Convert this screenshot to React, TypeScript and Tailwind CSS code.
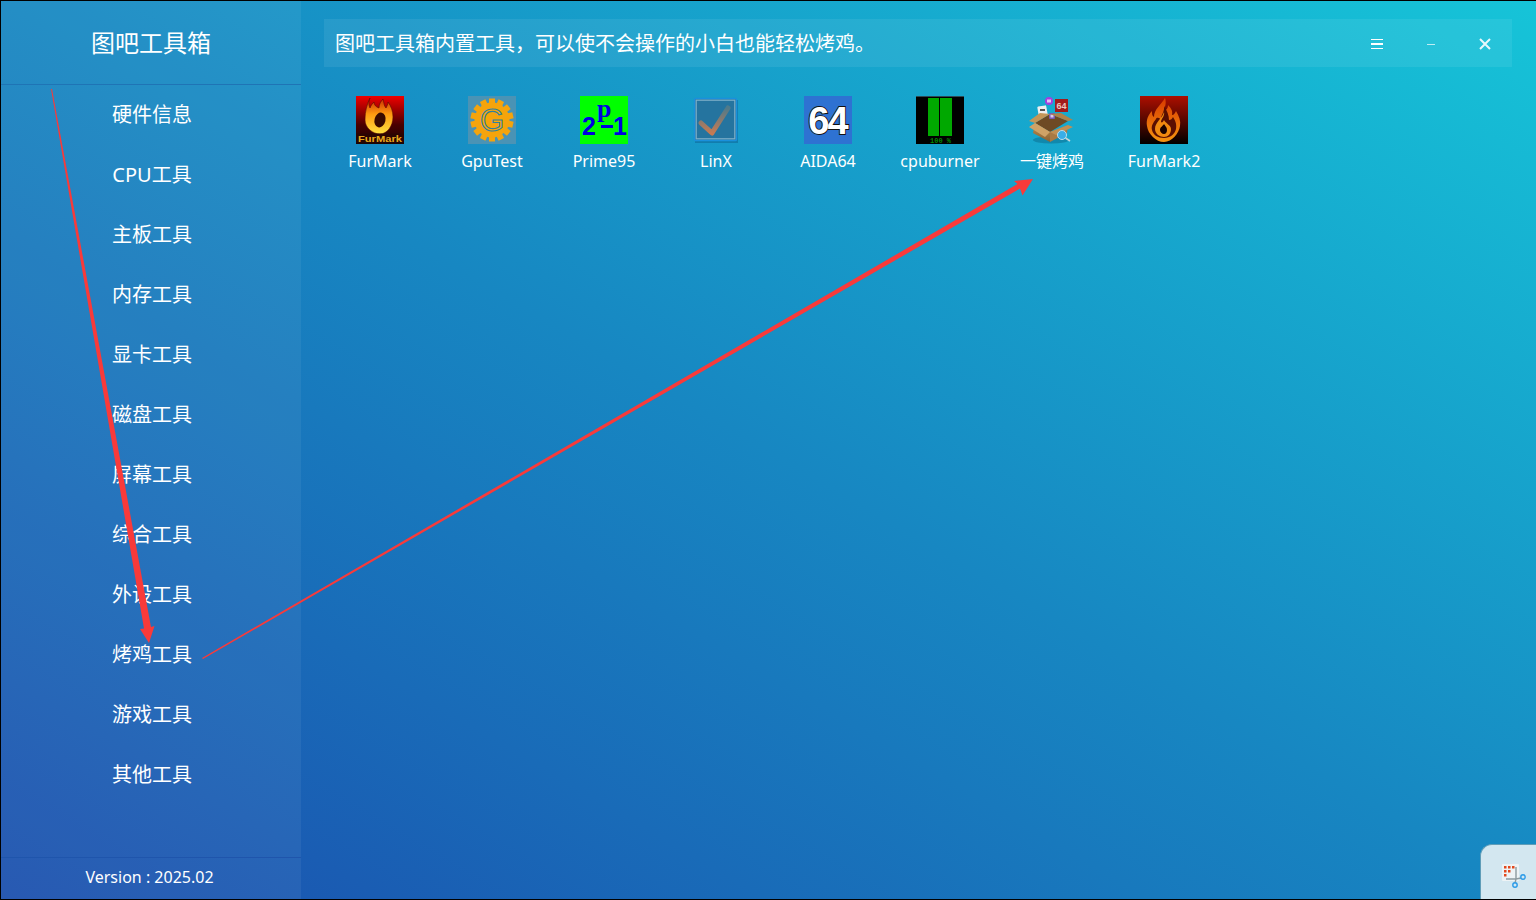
const cjk = { fontFamily: '"Noto Sans", "Noto Sans CJK SC", sans-serif' }

const menu = ['硬件信息', 'CPU工具', '主板工具', '内存工具', '显卡工具', '磁盘工具', '屏幕工具', '综合工具', '外设工具', '烤鸡工具', '游戏工具', '其他工具']

function FurMarkIcon() {
  return (
    <svg width="48" height="48" viewBox="0 0 48 48">
      <defs>
        <linearGradient id="fm-bg" x1="0" y1="0" x2="0" y2="1">
          <stop offset="0" stopColor="#f00000" />
          <stop offset="0.6" stopColor="#4a0000" />
          <stop offset="1" stopColor="#1a0505" />
        </linearGradient>
        <linearGradient id="fm-fire" x1="0" y1="0" x2="0" y2="1">
          <stop offset="0" stopColor="#c82a00" />
          <stop offset="0.45" stopColor="#ff9a10" />
          <stop offset="1" stopColor="#ffe040" />
        </linearGradient>
      </defs>
      <rect width="48" height="48" fill="url(#fm-bg)" />
      <path d="M14 2c-2 5-1 7 0 10 1-3 3-5 4-6 0 3 2 5 5 6 0-4 2-7 4-9 1 4 1 7 3 9 1-2 2-4 2-6 3 4 5 9 5 15 0 9-6 17-13 17S9 32 9 24C9 15 11 8 14 2z" fill="url(#fm-fire)" stroke="#5a0800" strokeWidth="0.6" />
      <ellipse cx="24" cy="24" rx="5.5" ry="7.5" fill="#3a0a00" transform="rotate(14 24 24)" />
      <rect x="0" y="37.5" width="48" height="9" fill="#2a0503" opacity="0.8" />
      <text x="24" y="45.5" textAnchor="middle" fontSize="9.5" fontWeight="700" fill="#e8a81c" fontFamily="Liberation Sans, sans-serif" textLength="44" lengthAdjust="spacingAndGlyphs">FurMark</text>
    </svg>
  )
}

function GpuTestIcon() {
  const teeth = Array.from({ length: 14 }, (_, i) => i * (360 / 14))
  return (
    <svg width="48" height="48" viewBox="0 0 48 48">
      <rect width="48" height="48" fill="#4a93b5" />
      {teeth.map((a) => (
        <rect key={a} x="21" y="2.5" width="6" height="8" fill="#f5a40c" transform={`rotate(${a} 24 24)`} />
      ))}
      <circle cx="24" cy="24" r="17.5" fill="#f5a40c" />
      <text x="24" y="35" textAnchor="middle" fontSize="31" fill="#f7a80c" stroke="#2f7f9f" strokeWidth="1.1" fontFamily="Liberation Sans, sans-serif">G</text>
    </svg>
  )
}

function PrimeIcon() {
  return (
    <svg width="48" height="48" viewBox="0 0 48 48">
      <rect width="48" height="48" fill="#00ff00" />
      <text x="2" y="39" fontSize="25" fontWeight="700" fill="#0000e0" fontFamily="Liberation Sans, sans-serif">2</text>
      <text x="17" y="21" fontSize="26" fontWeight="700" fill="#0000e0" fontFamily="Liberation Serif, serif">p</text>
      <rect x="21" y="29" width="12" height="3" fill="#0000e0" />
      <text x="33" y="39" fontSize="25" fontWeight="700" fill="#0000e0" fontFamily="Liberation Sans, sans-serif">1</text>
    </svg>
  )
}

function LinXIcon() {
  return (
    <svg width="48" height="48" viewBox="0 0 48 48">
      <defs>
        <linearGradient id="lx-check" x1="0" y1="0" x2="0" y2="1">
          <stop offset="0" stopColor="#4f7a8a" />
          <stop offset="1" stopColor="#c67a52" />
        </linearGradient>
      </defs>
      <rect x="3" y="4" width="43" height="43" fill="#0d5f92" opacity="0.5" />
      <rect x="2.5" y="2.5" width="42" height="42" rx="1" fill="#25749f" stroke="#1a90dc" strokeWidth="1.4" />
      <rect x="4.2" y="4.2" width="38.6" height="38.6" fill="none" stroke="#7fb0c8" strokeWidth="1.2" />
      <path d="M9 27l11 10L36 12" fill="none" stroke="url(#lx-check)" strokeWidth="5" strokeLinecap="round" strokeLinejoin="round" />
    </svg>
  )
}

function AidaIcon() {
  return (
    <svg width="48" height="48" viewBox="0 0 48 48">
      <rect width="48" height="48" fill="#2e72d2" />
      <text x="23.5" y="37.5" textAnchor="middle" fontSize="38" fontWeight="700" fill="#fff" stroke="#111" strokeWidth="1.8" paintOrder="stroke" fontFamily="Liberation Sans, sans-serif" letterSpacing="-2">64</text>
    </svg>
  )
}

function BurnerIcon() {
  return (
    <svg width="48" height="48" viewBox="0 0 48 48">
      <rect width="48" height="48" fill="#000" />
      <rect y="0" width="48" height="1" fill="#2c4a55" />
      <rect x="12" y="2" width="11" height="38" fill="#00a800" />
      <rect x="24" y="2" width="12" height="38" fill="#00a800" />
      <text x="24.5" y="46.5" textAnchor="middle" fontSize="7" fontWeight="700" fill="#008800" fontFamily="Liberation Mono, monospace">100 %</text>
    </svg>
  )
}

function BoxIcon() {
  return (
    <svg width="48" height="48" viewBox="0 0 48 48">
      <defs>
        <linearGradient id="box-side" x1="0" y1="0" x2="0" y2="1">
          <stop offset="0" stopColor="#c0904f" />
          <stop offset="1" stopColor="#8a6234" />
        </linearGradient>
      </defs>
      <ellipse cx="23" cy="44" rx="18" ry="3.5" fill="#0b6a8c" opacity="0.5" />
      <path d="M7 27L22 18l18 7-18 11z" fill="#6e4a24" />
      <rect x="10" y="10" width="9" height="10" rx="1" fill="#efefef" transform="rotate(-10 14 15)" />
      <rect x="12" y="13" width="5" height="2" fill="#555" />
      <rect x="27" y="3" width="13" height="13" fill="#a31c1c" />
      <text x="33.5" y="13" textAnchor="middle" fontSize="9" fontWeight="700" fill="#ecc8c0" fontFamily="Liberation Sans, sans-serif">64</text>
      <circle cx="21" cy="5" r="4" fill="#a43ee0" />
      <rect x="19" y="3.5" width="4" height="3" fill="#e4c6f4" />
      <rect x="21" y="17" width="6" height="6" rx="1" fill="#7a5ab0" />
      <rect x="22.5" y="18.5" width="3" height="3" fill="#d8ccec" />
      <path d="M7 27l15 9v10L5 37z" fill="url(#box-side)" />
      <path d="M22 36l18-7-1 8-17 9z" fill="#a87a44" />
      <path d="M7 27L1 25l11-8 10 1z" fill="#c49658" />
      <path d="M22 18l18 7 5-1-12-7z" fill="#b08248" />
      <path d="M7 27l15 9-5 5L1 31z" fill="#cfa266" />
      <path d="M22 36l18-7 5 2-17 8z" fill="#bf9054" />
      <circle cx="34" cy="39" r="4.5" fill="#39aee8" stroke="#bcdcec" strokeWidth="1" />
      <path d="M37.5 42l4.5 3" stroke="#c8d4d8" strokeWidth="1.6" />
    </svg>
  )
}

function FurMark2Icon() {
  return (
    <svg width="48" height="48" viewBox="0 0 48 48">
      <defs>
        <linearGradient id="fm2-bg" x1="0" y1="0" x2="0" y2="1">
          <stop offset="0" stopColor="#ad0f00" />
          <stop offset="1" stopColor="#000" />
        </linearGradient>
        <linearGradient id="fm2-fire" x1="0" y1="0" x2="0" y2="1">
          <stop offset="0" stopColor="#d83a00" />
          <stop offset="1" stopColor="#f59410" />
        </linearGradient>
      </defs>
      <rect width="48" height="48" fill="url(#fm2-bg)" />
      <path d="M25 2c2 6-1 9 0 12 2 0 3-3 3-5 3 3 5 6 4 10 2 0 3-2 4-4 3 5 5 10 4 15-1 7-8 16-16 16S8 38 7 30c-1-6 1-11 5-15 0 3 0 5 2 6 0-8 7-12 11-19z" fill="url(#fm2-fire)" />
      <path d="M24 10c1 5-3 9-3 13-3-1-4-2-5 0-3 4-5 7-4 11 1 5 6 8 12 8s11-4 12-9c1-5-1-9-3-12-1 2-2 3-4 3 0-5-2-9-5-14z" fill="#5a0f02" />
      <path d="M24 16c1 4-3 7-3 10 1 1 2 0 3-2 1 3 7 5 7 9 0 5-3 8-7 8s-9-3-9-8c0-7 7-10 9-17z" fill="#f08a10" />
      <path d="M24 28c1 2 3 3 3 6 0 2-1 4-3 4s-4-2-4-4c0-3 3-4 4-6z" fill="#1a0300" />
    </svg>
  )
}

const tools = [
  { name: 'FurMark', icon: <FurMarkIcon /> },
  { name: 'GpuTest', icon: <GpuTestIcon /> },
  { name: 'Prime95', icon: <PrimeIcon /> },
  { name: 'LinX', icon: <LinXIcon /> },
  { name: 'AIDA64', icon: <AidaIcon /> },
  { name: 'cpuburner', icon: <BurnerIcon /> },
  { name: '一键烤鸡', icon: <BoxIcon /> },
  { name: 'FurMark2', icon: <FurMark2Icon /> },
]

function Arrows() {
  return (
    <svg className="absolute inset-0 pointer-events-none" width="1536" height="900" viewBox="0 0 1536 900">
      <path d="M50 88 L51 88 L150 626 L153.5 625 L148 642 L139 628 L143 627.5 Z" fill="#f93a3a" />
      <path d="M201 657 L1016.5 183 L1013 180 L1032 178 L1021.5 194.5 L1019 187.5 L202 658 Z" fill="#f93a3a" />
    </svg>
  )
}

export default function App() {
  return (
    <div className="relative h-[900px] w-[1536px] overflow-hidden border-t border-b border-l border-black bg-[linear-gradient(to_top_right,#1b4fae,#1787c2_50%,#16c4d8)] text-white" style={cjk}>
      <div className="flex h-full">
        <aside className="flex w-[300px] shrink-0 flex-col bg-white/6">
          <div className="flex h-[84px] items-center justify-center border-b border-[#1f74b5] pt-[1px] text-2xl">图吧工具箱</div>
          <nav className="flex-1">
            {menu.map((m) => (
              <div key={m} className="flex h-[60px] items-center justify-center pl-[2px] text-xl">{m}</div>
            ))}
          </nav>
          <div className="flex h-[42px] items-center justify-center border-t border-[#1f55ac] pr-[3px] pb-[3px] text-base">Version : 2025.02</div>
        </aside>
        <main className="min-w-0 flex-1 px-[23px] pt-[18px] pr-[24px]">
          <div className="flex h-12 items-center justify-between bg-white/7 pt-[1px] pl-[11px] text-xl">
            <span>图吧工具箱内置工具，可以使不会操作的小白也能轻松烤鸡。</span>
            <div className="flex items-center text-white">
              <div className="flex w-[54px] justify-center">
                <svg width="12" height="10" viewBox="0 0 12 10"><path d="M0 0h12v1H0zM0 4h12v2H0zM0 9h12v1H0z" fill="#fff" /></svg>
              </div>
              <div className="flex w-[54px] justify-center pt-[2px]">
                <div className="h-[1px] w-2 bg-white/70" />
              </div>
              <div className="flex w-[54px] justify-center">
                <svg width="12" height="12" viewBox="0 0 12 12"><path d="M1 1l10 10M11 1L1 11" stroke="#e8f8fb" strokeWidth="2" /></svg>
              </div>
            </div>
          </div>
          <div className="mt-[29px] flex">
            {tools.map((t) => (
              <div key={t.name} className="flex w-[112px] flex-col items-center">
                <div className="h-12 w-12">{t.icon}</div>
                <span className="mt-[5px] text-base leading-6">{t.name}</span>
              </div>
            ))}
          </div>
        </main>
      </div>
      <Arrows />
      <div className="absolute right-0 bottom-0 flex h-[55px] w-[56px] items-center justify-center rounded-tl-[12px] border-t border-l border-[#5f9db8] bg-[#d3e7f0] pt-[10px] pl-[12px]">
        <svg width="26" height="26" viewBox="0 0 26 26">
          <rect x="0" y="0" width="17" height="17" rx="1" fill="#eef3f5" />
          <path d="M2 2h2.5v2.5H2zM6 2h2.5v2.5H6zM10 2h2.5v2.5H10zM2 6h2.5v2.5H2zM2 10h2.5v2.5H2zM6 6h2.5v2.5H6z" fill="#e2491c" />
          <path d="M14 3v12l-1 4M4 15h10l5 -1" stroke="#8d9a9f" strokeWidth="1.4" fill="none" />
          <circle cx="21" cy="13" r="2.2" fill="none" stroke="#2b9be8" strokeWidth="1.4" />
          <circle cx="13" cy="21" r="2.2" fill="none" stroke="#2b9be8" strokeWidth="1.4" />
        </svg>
      </div>
    </div>
  )
}
